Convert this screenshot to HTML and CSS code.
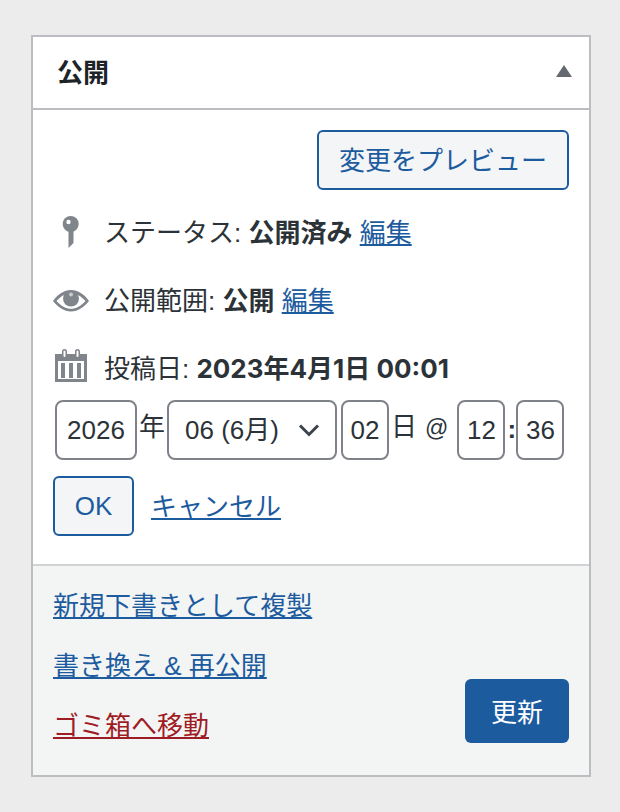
FILE: index.html
```html
<!DOCTYPE html>
<html lang="ja">
<head>
    <meta charset="UTF-8">
    <meta name="viewport" content="width=device-width, initial-scale=1.0">
    <title>公開</title>
    <link rel="stylesheet" href="styles.css">
</head>
<body>
    <div class="panel">
        <div class="panel-head">
            <h2>公開</h2>
            <svg class="toggle" width="16" height="12" viewBox="0 0 16 12"><path d="M8 0l8 12H0z" fill="#646970"/></svg>
        </div>
        <div class="panel-main">
            <div class="preview-row">
                <a class="button cjk" href="#">変更をプレビュー</a>
            </div>
            <div class="misc-row">
                <span class="misc-icon">
                    <svg width="36" height="36" viewBox="0 0 36 36"><circle cx="17.700" cy="12" r="8" fill="#80848b"/><path d="M15.500 18V36l5-5V18z" fill="#80848b"/><circle cx="15.500" cy="10" r="2.200" fill="#fff"/></svg>
                </span>
                <span>ステータス: <b>公開済み</b> <a href="#">編集</a></span>
            </div>
            <div class="misc-row">
                <span class="misc-icon">
                    <svg width="36" height="36" viewBox="0 0 36 36"><path fill-rule="evenodd" d="M0 21C5 14 11 10 18 10s13 4 18 11c-5 6-11 10.500-18 10.500S5 27 0 21zm3.500 0C8 26 13 28.800 18 28.800S28 26 32.500 21C28 16 23 13 18 13S8 16 3.500 21z" fill="#80848b"/><circle cx="18" cy="18.500" r="8" fill="#80848b"/><circle cx="18" cy="14.500" r="2" fill="#c9cbce"/></svg>
                </span>
                <span>公開範囲: <b>公開</b> <a href="#">編集</a></span>
            </div>
            <div class="misc-row">
                <span class="misc-icon">
                    <svg width="32" height="34" viewBox="0 0 32 34"><path d="M0 5h32v28H0z" fill="#80848b"/><rect x="7.750" y=".75" width="3.500" height="8" rx="1.750" fill="#fff" stroke="#80848b" stroke-width="1.500"/><rect x="20.750" y=".75" width="3.500" height="8" rx="1.750" fill="#fff" stroke="#80848b" stroke-width="1.500"/><path d="M3 12h26v18H3z" fill="#fff"/><path d="M6 14h4v15H6zM14 14h4v15h-4zM22 14h4v15h-4z" fill="#80848b"/></svg>
                </span>
                <span>投稿日: <b class="stamp">2023年4月1日 00:01</b></span>
            </div>
            <div class="date-row">
                <input class="field w-year" type="text" value="2026">
                <span class="date-label">年</span>
                <div class="select-wrap">
                    <select class="field w-month">
                        <option>06 (6月)</option>
                    </select>
                    <svg class="chevron" width="22" height="14" viewBox="0 0 22 14"><path d="M2 2.500l9 9 9-9" fill="none" stroke="#3c434a" stroke-width="3"/></svg>
                </div>
                <input class="field w-small day" type="text" value="02">
                <span class="date-label">日</span>
                <span class="date-label at">@</span>
                <input class="field w-small" type="text" value="12">
                <span class="date-label colon">:</span>
                <input class="field w-small" type="text" value="36">
            </div>
            <div class="date-actions">
                <a class="button ok" href="#">OK</a>
                <a class="cancel" href="#">キャンセル</a>
            </div>
        </div>
        <div class="panel-foot">
            <div class="foot-links">
                <a href="#">新規下書きとして複製</a>
                <a href="#">書き換え &amp; 再公開</a>
                <a class="trash" href="#">ゴミ箱へ移動</a>
            </div>
            <a class="update" href="#">更新</a>
        </div>
    </div>
</body>
</html>
```
FILE: styles.css
```css
body {
    margin: 0;
    background: #ececec;
    color: #2c3338;
    font-family: "Liberation Sans", "Noto Sans CJK JP", sans-serif;
    font-size: 26px;
}
a {
    color: #1d5b9f;
}
b {
    font-weight: 700;
}
.stamp {
    font-family: Inter, "Noto Sans CJK JP", sans-serif;
}
.panel {
    width: 556px;
    margin: 35px 0 0 31px;
    border: 2px solid #bdbdc1;
    background: #fff;
}
.panel-head {
    display: flex;
    align-items: center;
    justify-content: space-between;
    box-sizing: border-box;
    height: 73px;
    padding: 0 17px 4px 24px;
    border-bottom: 2px solid #bdbdc1;
}
.panel-head h2 {
    margin: 0;
    font-size: 26px;
    color: #1d2327;
}
.panel-main {
    padding: 20px 20px 28px;
}
.preview-row {
    display: flex;
    justify-content: flex-end;
    margin-bottom: 6px;
}
.button {
    display: inline-flex;
    align-items: center;
    justify-content: center;
    box-sizing: border-box;
    height: 60px;
    padding: 0 20px;
    border: 2px solid #1d5b9f;
    border-radius: 6px;
    background: #f3f5f6;
    text-decoration: none;
}
.cjk {
    padding-bottom: 4px;
}
.misc-row {
    display: flex;
    align-items: center;
    height: 68px;
}
.misc-icon {
    display: flex;
    justify-content: center;
    width: 36px;
    margin-right: 15px;
}
.date-row {
    display: flex;
    align-items: flex-start;
    margin-left: 2px;
}
.field {
    box-sizing: border-box;
    height: 60px;
    margin: 0;
    padding: 0;
    border: 2px solid #7f8389;
    border-radius: 8px;
    background: #fff;
    color: #2c3338;
    font: inherit;
    text-align: center;
}
.w-year {
    width: 82px;
}
.w-small {
    width: 48px;
}
.w-month {
    width: 170px;
    padding-left: 16px;
    text-align: left;
    appearance: none;
}
.select-wrap {
    position: relative;
    height: 60px;
}
.chevron {
    position: absolute;
    top: 23px;
    right: 17px;
}
.day {
    margin-left: 4px;
}
.date-label {
    margin: 12px 2px 0;
    line-height: 30px;
}
.at {
    margin: 13px 9px 0 6px;
    font-size: 23px;
}
.colon {
    width: 7px;
    margin-top: 14px;
    font-weight: 700;
}
.date-actions {
    display: flex;
    align-items: center;
    gap: 17px;
    margin-top: 16px;
}
.ok {
    width: 81px;
    padding: 0;
}
.cancel {
    margin-bottom: 4px;
}
.panel-foot {
    display: flex;
    align-items: flex-end;
    justify-content: space-between;
    box-sizing: border-box;
    height: 211px;
    padding: 0 20px 32px;
    border-top: 2px solid #d0d2d4;
    background: #f3f5f5;
}
.foot-links {
    display: flex;
    flex-direction: column;
    align-items: flex-start;
    gap: 30px;
    margin-bottom: 2px;
}
.foot-links a {
    line-height: 30px;
}
.trash {
    color: #a01c24;
}
.update {
    display: flex;
    align-items: center;
    justify-content: center;
    box-sizing: border-box;
    width: 104px;
    height: 64px;
    padding-bottom: 2px;
    border-radius: 6px;
    background: #1d5b9f;
    color: #fff;
    text-decoration: none;
}
```
